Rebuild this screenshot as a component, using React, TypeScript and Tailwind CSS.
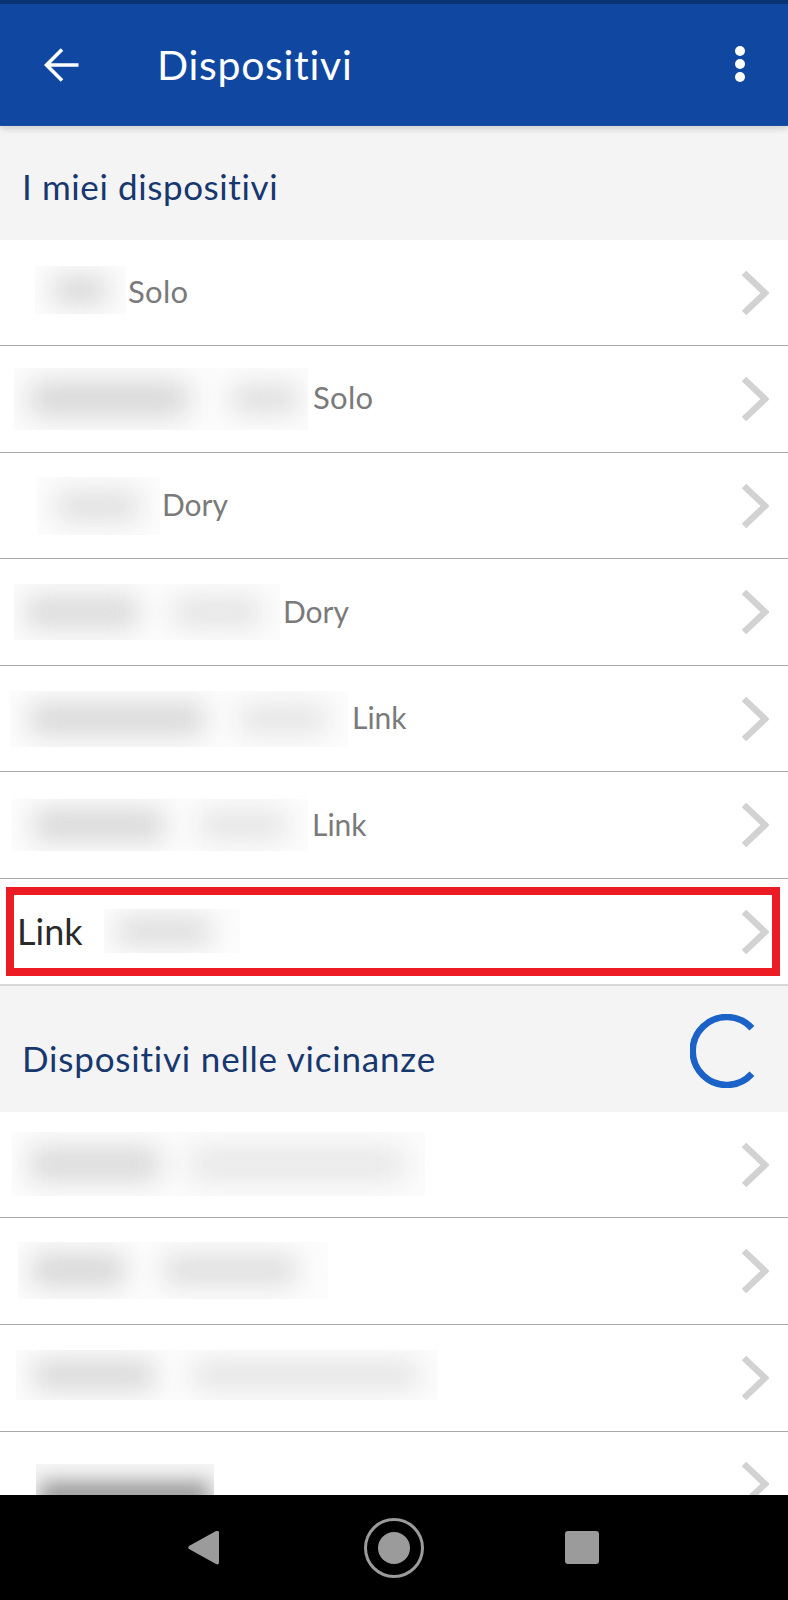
const font = "font-['Lato','Liberation_Sans',sans-serif]";

function Chevron() {
  return (
    <svg width="28" height="46" viewBox="0 0 28 46" fill="none" className="shrink-0">
      <path d="M3 3 L24 23 L3 43" stroke="#d2d2d2" strokeWidth="6.5" />
    </svg>
  );
}

function Blob({ c }: { c: string }) {
  return <div className={c} />;
}

type R = { box: string; blobs: string[]; label?: string; labelClass?: string; h: string };

const wide = "text-[31px] tracking-[0.3px]";
const narrow = "text-[30px] tracking-[0px]";

const mine: R[] = [
  { h: "h-[106px]", box: "ml-[35px] w-[91px] h-[48px] -mt-[5px] pl-[18px]", blobs: ["w-[54px] h-[28px] bg-[#d8d8d8] blur-[13px]"], label: "Solo", labelClass: `ml-[2px] ${wide}` },
  { h: "h-[107px]", box: "ml-[14px] w-[294px] h-[62px] pl-[16px] gap-[44px]", blobs: ["w-[158px] h-[32px] bg-[#d4d4d4] blur-[14px]", "w-[66px] h-[28px] bg-[#dedede] blur-[13px]"], label: "Solo", labelClass: `ml-[5px] ${wide}` },
  { h: "h-[106px]", box: "ml-[37px] w-[123px] h-[58px] pl-[20px]", blobs: ["w-[82px] h-[30px] bg-[#e0e0e0] blur-[13px]"], label: "Dory", labelClass: `ml-[2px] ${narrow}` },
  { h: "h-[107px]", box: "ml-[14px] w-[266px] h-[56px] pl-[12px] gap-[36px]", blobs: ["w-[112px] h-[32px] bg-[#dadada] blur-[13px]", "w-[86px] h-[30px] bg-[#e4e4e4] blur-[13px]"], label: "Dory", labelClass: `ml-[3px] ${narrow}` },
  { h: "h-[106px]", box: "ml-[10px] w-[338px] h-[56px] pl-[20px] gap-[36px]", blobs: ["w-[174px] h-[32px] bg-[#d8d8d8] blur-[13px]", "w-[86px] h-[28px] bg-[#e4e4e4] blur-[13px]"], label: "Link", labelClass: `ml-[4px] ${narrow}` },
  { h: "h-[107px]", box: "ml-[12px] w-[296px] h-[52px] pl-[22px] gap-[36px]", blobs: ["w-[130px] h-[32px] bg-[#d8d8d8] blur-[13px]", "w-[86px] h-[28px] bg-[#e4e4e4] blur-[13px]"], label: "Link", labelClass: `ml-[4px] ${narrow}` },
];

const near: R[] = [
  { h: "h-[106px]", box: "ml-[12px] w-[413px] h-[64px] -mt-[1px] pl-[18px] gap-[30px]", blobs: ["w-[130px] h-[34px] bg-[#dadada] blur-[13px]", "w-[214px] h-[34px] bg-[#e7e7e7] blur-[14px]"] },
  { h: "h-[107px]", box: "ml-[18px] w-[310px] h-[57px] -mt-[2px] pl-[14px] gap-[40px]", blobs: ["w-[92px] h-[32px] bg-[#d6d6d6] blur-[13px]", "w-[132px] h-[30px] bg-[#dedede] blur-[13px]"] },
  { h: "h-[107px]", box: "ml-[16px] w-[422px] h-[50px] -mt-[6px] pl-[18px] gap-[40px]", blobs: ["w-[120px] h-[30px] bg-[#d8d8d8] blur-[13px]", "w-[224px] h-[28px] bg-[#e4e4e4] blur-[13px]"] },
];

function Row({ r }: { r: R }) {
  return (
    <div className={`${r.h} shrink-0 bg-white border-b border-[#a8a8a8] flex items-center pr-[19px]`}>
      <div className={`${r.box} shrink-0 bg-[#fcfcfc] flex items-center overflow-hidden`}>
        {r.blobs.map((c, i) => (
          <Blob key={i} c={`${c} shrink-0`} />
        ))}
      </div>
      {r.label && <span className={`${r.labelClass} -mt-[3px] leading-none text-[#7a7a7a]`}>{r.label}</span>}
      <div className="flex-1" />
      <Chevron />
    </div>
  );
}

export default function App() {
  return (
    <div className={`w-[788px] h-[1600px] overflow-hidden flex flex-col bg-[#f4f4f5] ${font}`}>
      <header className="h-[126px] shrink-0 bg-[#0f47a1] border-t-4 border-[#0a3373] border-b border-b-[#1a4fa8] shadow-[0_3px_6px_rgba(0,0,0,0.15)] flex items-center pl-[44px] pr-[43px] z-10">
        <svg width="36" height="36" viewBox="0 0 36 36" fill="none" className="shrink-0">
          <path d="M34.5 18 H3 M18 2.5 L2.5 18 L18 33.5" stroke="#ffffff" strokeWidth="3.6" />
        </svg>
        <h1 className="ml-[77px] text-[41px] tracking-[0.7px] leading-none text-white font-normal -mt-[1px]">Dispositivi</h1>
        <div className="flex-1" />
        <div className="flex flex-col gap-[3px] -mt-[1px]">
          <div className="w-[10px] h-[10px] rounded-full bg-white" />
          <div className="w-[10px] h-[10px] rounded-full bg-white" />
          <div className="w-[10px] h-[10px] rounded-full bg-white" />
        </div>
      </header>

      <section className="h-[114px] shrink-0 flex items-center pl-[22px]">
        <h2 className="text-[35px] tracking-[0.6px] leading-none text-[#16386f] font-normal mt-[6px]">I miei dispositivi</h2>
      </section>

      {mine.map((r, i) => (
        <Row key={i} r={r} />
      ))}

      <div className="h-[107px] shrink-0 bg-white border-b-2 border-[#d8d8d8] flex items-center px-[6px]">
        <div className="w-[774px] h-[89px] border-8 border-[#ed1c24] flex items-center pl-[3px] pr-[3px]">
          <span className="text-[36px] leading-none text-[#2a2a2a] -mt-[2px]">Link</span>
          <div className="ml-[21px] w-[136px] h-[44px] -mt-[1px] pl-[14px] bg-[#fcfcfc] flex items-center overflow-hidden">
            <Blob c="w-[92px] h-[28px] bg-[#dcdcdc] blur-[13px] shrink-0" />
          </div>
          <div className="flex-1" />
          <Chevron />
        </div>
      </div>

      <section className="h-[126px] shrink-0 flex items-center justify-between pl-[22px] pr-[24px]">
        <h2 className="text-[35px] tracking-[0.8px] leading-none text-[#16386f] font-normal mt-[18px]">Dispositivi nelle vicinanze</h2>
        <svg width="74" height="74" viewBox="0 0 74 74" fill="none" className="shrink-0 mt-[3px]">
          <path d="M61.9 14.2 A34 34 0 1 0 61.9 59.8" stroke="#1a62c8" strokeWidth="6.5" />
        </svg>
      </section>

      <div className="flex-1 min-h-0 overflow-hidden flex flex-col">
        {near.map((r, i) => (
          <Row key={i} r={r} />
        ))}
        <div className="h-[106px] shrink-0 bg-white flex pr-[19px]">
          <div className="ml-[36px] mt-[32px] w-[178px] h-[32px] shrink-0 bg-[#f6f6f6] flex items-end justify-center overflow-hidden">
            <Blob c="w-[170px] h-[26px] -mb-[12px] shrink-0 bg-[#959595] blur-[10px]" />
          </div>
          <div className="flex-1" />
          <div className="mt-[29px]">
            <Chevron />
          </div>
        </div>
      </div>

      <nav className="h-[105px] shrink-0 bg-black flex items-center pl-[188px] z-10">
        <svg width="31" height="35" viewBox="0 0 31 35" className="shrink-0">
          <path d="M30 1 C31 1 31 2 31 3 V32 C31 34 30 35 28 34 L1 19 C0 18 0 17 1 16 L28 1 Z" fill="#9b9b9b" />
        </svg>
        <svg width="60" height="60" viewBox="0 0 60 60" fill="none" className="ml-[145px] shrink-0">
          <circle cx="30" cy="30" r="28.5" stroke="#9b9b9b" strokeWidth="3" />
          <circle cx="30" cy="30" r="16" fill="#9b9b9b" />
        </svg>
        <div className="ml-[141px] w-[34px] h-[33px] rounded-[3px] bg-[#9b9b9b]" />
      </nav>
    </div>
  );
}
